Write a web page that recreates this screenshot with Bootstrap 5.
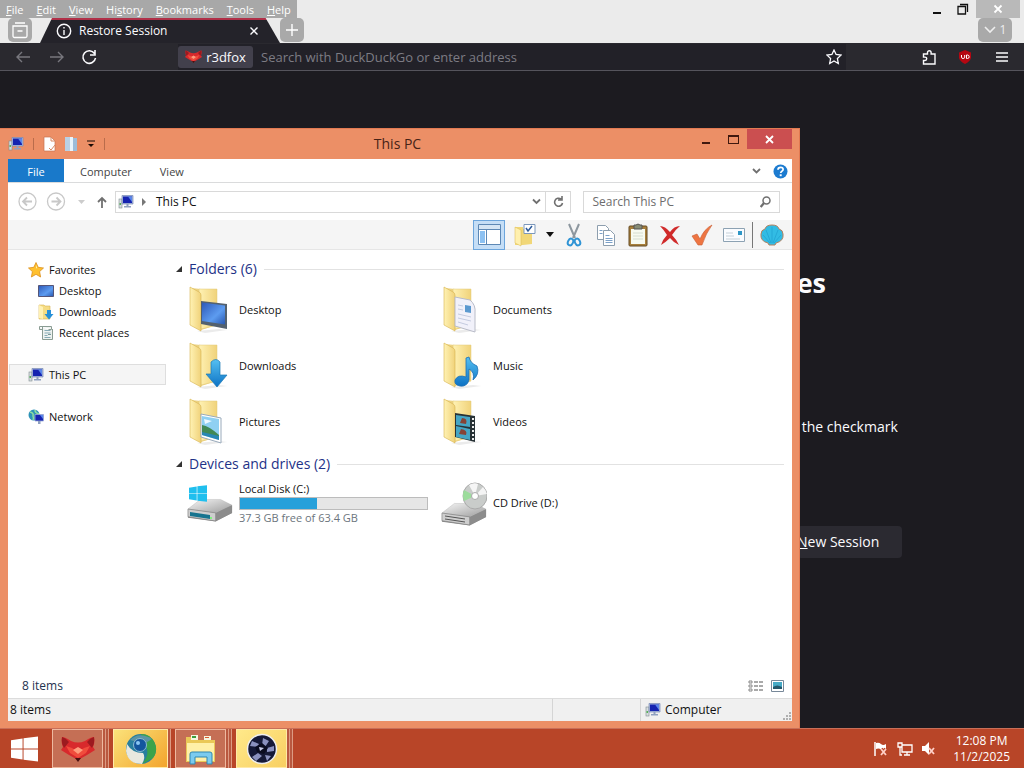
<!DOCTYPE html>
<html lang="en">
<head>
<meta charset="utf-8">
<meta name="viewport" content="width=device-width, initial-scale=1">
<title>Restore Session</title>
<link href="https://cdn.jsdelivr.net/npm/bootstrap@5.3.0/dist/css/bootstrap.min.css" rel="stylesheet">
<style>
body{font-family:"Open Sans","Noto Sans",sans-serif;font-size:12px;line-height:16px;color:#111;background:#1c1b20}
button{border:0;background:none;padding:0;color:inherit;display:inline-flex;align-items:center;justify-content:center;flex:none}
a{color:inherit;text-decoration:none}
svg{display:block;flex:none}
.ln{fill:none;stroke:currentColor}
/* browser */
.menus{background:#a8a8a8;color:#fff;height:18px;padding:2px 6px 0;gap:13px;font-size:11px}
.chrome-top{background:#ebebeb;height:18px}
.strip{background:#ebebeb;height:25px}
.sq{background:#a9a9a9;color:#fff;width:24px;height:24px;border-radius:5px}
.sq-wide{width:34px;margin-right:12px;color:#eee}
.ctl{width:26px;height:18px;color:#111}
.ctl-x{width:44px;background:#b9b9b9;color:#fff}
.tabbox{width:240px;height:25px;color:#fbfbfe;margin:0 0 0 8px;padding:0 21px 0 16px;gap:7px;background:linear-gradient(#b03048 2px,#24232a 2px);clip-path:polygon(5% 0,94% 0,100% 100%,0 100%)}
.tools{background:#2a292f;height:28px;border-bottom:1px solid #55545c;color:#fbfbfe}
.dim{color:#78777e}
.url{background:#222128;height:26px;margin:0 68px 0 80px;padding-right:4px}
.ident{background:#42404c;border-radius:3px;height:22px;width:75px;gap:4px;font-size:13px}
.url input{background:none;border:0;color:#8b8a92;font-size:13px;outline:0;min-width:0}
.url input::placeholder{color:#7d7c84;opacity:1}
.page{padding:194px 0 0 77.8%;color:#fbfbfe;font-size:14px}
.page h1{font-size:27px;line-height:36px;font-weight:700;margin:0 0 116px}
.page p{margin:0 0 89px;padding-left:5px;line-height:20px;white-space:nowrap}
.page button{background:#2b2a31;border-radius:4px;height:32px;width:105px;padding-right:22px}
/* explorer */
.win{position:absolute;left:0;top:128px;bottom:0;width:78.125%;background:#ec8f66;border:solid #e27a52;border-width:1px 1px 0 0;padding:0 7px 7px 8px}
.title-row{height:30px;font-size:14px;color:#472317}
.qat{gap:9px;width:110px}
.caps button{width:27px;height:20px;color:#40190f}
.caps .shut{width:45px;background:#cb4f50;color:#fff}
.face{background:#fff;min-height:0}
.tabs{height:24px;border-bottom:1px solid #dadbdc;color:#444;font-size:11px}
.tabs button{padding-top:2px}
.tabs .filetab{background:#1979ca;color:#fff;width:56px;height:23px}
.pale{color:#c8c8c8}
.grey{color:#707070}
.addr{height:37px;padding:0 12px 0 10px}
.fld{border:1px solid #d9d9d9;height:22px}
.seek{width:25.8%;margin-left:12px}
.fld input{border:0;outline:0;background:none;font-size:12px;min-width:0}
.fld input::placeholder{color:#6d6d6d;opacity:1}
.refresh{width:25px;border-left:1px solid #d9d9d9}
.bar{height:30px;background:#f5f5f5;border-bottom:1px solid #e6e6e6;padding-right:8px;gap:8px}
.bar button{width:24px;height:28px}
.bar .on{width:32px;height:30px;background:#c5def6;border:1px solid #6ca5dc}
.bar .more{width:9px}
.bar .rule{width:1px;height:26px;background:#777;margin:0 -1px 0 -2px}
.side{width:162px;padding:9px 4px 0 1px;font-size:11px}
.side a{display:flex;align-items:center;gap:5px;height:21px;padding-left:18px;border:1px solid transparent}
.side a.sub{padding-left:28px}
.side a.cur{background:#f5f5f5;border-color:#dedede}
.side .apart{margin-top:21px}
.list{padding:8px 8px 0 6px}
.grp{font-size:14px;line-height:22px;color:#1e3287;margin:0;font-weight:400;gap:7px}
.grp::after{content:"";flex:1;border-top:1px solid #e2e2e2}
.tiles{display:grid;grid-template-columns:repeat(auto-fill,254px);grid-auto-rows:56px;padding:2px 0 0 9px;margin-bottom:3px;font-size:11px}
.tiles a{display:flex;align-items:center;gap:6px}
.meter{width:189px;height:13px;background:#e6e6e6;border:1px solid #bcbcbc}
.meter div{height:100%;background:#26a0da}
.det{height:24px;padding:0 8px 0 14px;color:#1f3350}
.stat{height:23px;background:#f0f0f0;border-top:1px solid #dcdcdc}
.stat span{padding-left:2px}
.cell{border-left:1px solid #d5d5d5;height:22px}
/* taskbar */
.task{height:40px;background:#b84528;border-top:1px solid #c96f58;color:#fff}
.start{width:52px;padding-right:4px}
.app{width:51px;height:39px;border:1px solid #eeb9a0;background:#c56f55}
.app-y{background:linear-gradient(135deg,#fbe27a,#f3a42c);border-color:#ffe9a8}
.app-p{background:linear-gradient(135deg,#ffe98a,#f8cf62);border-color:#ffe9a8}
.app-w{width:55px}
.stack{width:3px;height:39px;border-right:1px solid #dc9b83;background:#b9583f}
.slot{margin-right:4px}
.tray{gap:8px;margin-right:14px}
</style>
</head>
<body class="vh-100 overflow-hidden d-flex flex-column">
<svg width="0" height="0" class="position-absolute">
<defs>
<linearGradient id="gy" x2="1"><stop stop-color="#fff2b4"/><stop offset="1" stop-color="#f0d27a"/></linearGradient>
<linearGradient id="gb" x2="1" y2="1"><stop stop-color="#2d58b8"/><stop offset=".6" stop-color="#5d9cf0"/><stop offset="1" stop-color="#2857b0"/></linearGradient>
<linearGradient id="gd" y2="1" x2="0"><stop stop-color="#55c0f2"/><stop offset="1" stop-color="#0d72c4"/></linearGradient>
<linearGradient id="gs" y2="1" x2="1"><stop stop-color="#f6f6f6"/><stop offset="1" stop-color="#9c9c9c"/></linearGradient>
<symbol id="pc" viewBox="0 0 16 16"><rect x="1" y="5" width="3" height="9" fill="#d7dde0" stroke="#7f8c90" stroke-width=".6"/><rect x="1.500" y="9" width="1.500" height="2" fill="#58b158"/><path d="M4 1.500h11v8.500H4z" fill="#a9b9dc" stroke="#7788b5" stroke-width=".7"/><path d="M5 2.500h9v6.500H5z" fill="#1523b0"/><path d="M10 2.500h4V8z" fill="#5a86ea"/><path d="M8.500 10h2v2h2.500v1.500H6V12h2.500z" fill="#8fa0bf"/></symbol>
<symbol id="fold" viewBox="0 0 48 48"><path d="M12 45l22-2 8 1-22 3z" fill="#ddd" opacity=".6"/><path d="M6 2l10 1h16v36l-16 5z" fill="#ecd283"/><path d="M14 3h18v36l-16 4z" fill="url(#gy)" stroke="#e3ca78" stroke-width=".5"/><path d="M5 1l9 5q2 1 2 3v36L5 39z" fill="url(#gy)" stroke="#d6b44f" stroke-width=".6"/></symbol>
<symbol id="fox" viewBox="0 0 34 26"><path d="M1 1q3 0 9 4 7 3 14 0 6-4 9-4 1 6-1 10l2 3-8 5-9 5-9-5-8-5 2-3Q0 7 1 1z" fill="#d8292c"/><path d="M1 1q4 1 7 5l-5 6Q0 7 1 1zM33 1q-4 1-7 5l5 6q3-5 2-11z" fill="#9c1a1f"/><path d="M5 10l6 2 6 4 6-4 6-2-4 7-8 5-8-5z" fill="#f04c3c"/><path d="M12 14l5-3 5 3-5 4z" fill="#ff9c7c"/><path d="M14 22h6l-3 4z" fill="#4a1010"/></symbol>
<symbol id="win" viewBox="0 0 28 26"><path d="M0 4l12-2v10.500H0zM13 1.800L28 0v12.500H13zM0 13.500h12V24L0 22zM13 13.500h15V26l-15-1.800z"/></symbol>
<symbol id="drive" viewBox="0 0 48 24"><path d="M1 12L14 2h21l12 5v8L30 24 1 20z" fill="#8d8d8d"/><path d="M1 11L14 1h21l12 6-17 8z" fill="url(#gs)" stroke="#bbb" stroke-width=".5"/><path d="M1 11l29 4v8.500L1 19z" fill="#cecece" stroke="#777" stroke-width=".6"/><path d="M30 15l17-8v8l-17 8.500z" fill="#8c8c8c"/></symbol>
</defs></svg>

<main class="flex-grow-1 position-relative d-flex flex-column overflow-hidden">
 <header>
  <div class="chrome-top d-flex">
   <nav class="menus d-flex" aria-label="Menu bar">
    <button type="button"><span><u>F</u>ile</span></button><button type="button"><span><u>E</u>dit</span></button><button type="button"><span><u>V</u>iew</span></button><button type="button"><span>Hi<u>s</u>tory</span></button><button type="button"><span><u>B</u>ookmarks</span></button><button type="button"><span><u>T</u>ools</span></button><button type="button"><span><u>H</u>elp</span></button>
   </nav>
   <div class="ms-auto d-flex">
    <button class="ctl" type="button" aria-label="Minimize"><svg width="10" height="10"><path d="M1 9h8" stroke="#111" stroke-width="2"/></svg></button>
    <button class="ctl" type="button" aria-label="Restore"><svg class="ln" width="12" height="12" stroke-width="1.300"><path d="M1 3.500h7.500V11H1zM3 1.500h7.500V9"/></svg></button>
    <button class="ctl ctl-x ms-0 me-1" type="button" aria-label="Close browser"><svg class="ln" width="10" height="10" stroke-width="1.800"><path d="M1.500 1.500l7 7M8.500 1.500l-7 7"/></svg></button>
   </div>
  </div>
  <div class="strip d-flex">
   <button class="sq ms-2" type="button" aria-label="Recent browsing"><svg class="ln" width="18" height="18" stroke-width="1.300"><path d="M4 2h10M2 5h14v10a1.500 1.500 0 0 1-1.500 1.500h-11A1.500 1.500 0 0 1 2 15zM6.500 10h5"/></svg></button>
   <div class="tabbox d-flex align-items-center">
    <svg class="ln" width="16" height="16" stroke-width="1.400"><circle cx="8" cy="8" r="6.700"/><path d="M8 7v5M8 4v1.500"/></svg><span>Restore Session</span>
    <button class="ms-auto" type="button" aria-label="Close tab"><svg class="ln" width="10" height="10" stroke-width="1.400"><path d="M1.500 1.500l7 7M8.500 1.500l-7 7"/></svg></button>
   </div>
   <button class="sq" type="button" aria-label="New tab"><svg class="ln" width="14" height="14" stroke-width="1.400"><path d="M7 1v12M1 7h12"/></svg></button>
   <button class="sq sq-wide ms-auto" type="button" aria-label="List all tabs"><svg class="ln" width="12" height="10" stroke-width="1.600"><path d="M1 2l5 5 5-5"/></svg><span class="ms-1">1</span></button>
  </div>
  <div class="tools d-flex align-items-center">
   <button class="dim ms-3" type="button" aria-label="Back"><svg class="ln" width="14" height="14" stroke-width="1.400"><path d="M14 7H1M6 2L1 7l5 5"/></svg></button>
   <button class="dim ms-3 ps-1" type="button" aria-label="Forward"><svg class="ln" width="14" height="14" stroke-width="1.400"><path d="M0 7h13M8 2l5 5-5 5"/></svg></button>
   <button class="ms-3" type="button" aria-label="Reload"><svg class="ln" width="18" height="16" stroke-width="1.600"><path d="M14.500 4.500A6.300 6.300 0 1 0 15.500 9M15 1v5h-5"/></svg></button>
   <div class="url d-flex align-items-center flex-grow-1">
    <button class="ident" type="button"><svg width="17" height="13"><use href="#fox"/></svg>r3dfox</button>
    <input class="flex-grow-1 ms-2 p-0" type="text" aria-label="Address" placeholder="Search with DuckDuckGo or enter address">
    <button type="button" aria-label="Bookmark"><svg class="ln" width="16" height="16" stroke-width="1.300"><path d="M8 1l2.100 4.500 4.900.6-3.600 3.400.9 5L8 12l-4.300 2.500.9-5L1 6.100l4.900-.6z"/></svg></button>
   </div>
   <button class="ms-2 me-1" type="button" aria-label="Extensions"><svg class="ln" width="16" height="16" stroke-width="1.400"><path d="M1.500 5h4V3.500a1.800 1.800 0 0 1 3.600 0V5H13v10H1.500v-3.500H3a1.700 1.700 0 0 0 0-3.400H1.500z"/></svg></button>
   <button class="mx-3 pe-2" type="button" aria-label="uBlock Origin"><svg width="14" height="14"><path d="M7 0l6 2.500V8q-1 3.500-6 6-5-2.500-6-6V2.500z" fill="#b50712"/><path d="M3.500 5v2.200q0 1.300 1.600 1.300T6.700 7.200V5M8.500 5h1q1.700.2 1.700 1.800T9.500 8.500h-1z" fill="none" stroke="#fff"/></svg></button>
   <button class="me-3" type="button" aria-label="Application menu"><svg class="ln" width="12" height="12" stroke-width="1.300"><path d="M0 2h12M0 6h12M0 10h12"/></svg></button>
  </div>
 </header>
 <section class="page flex-grow-1">
  <h1>es</h1>
  <p>the checkmark</p>
  <button type="button"><span><u>N</u>ew Session</span></button>
 </section>

 <section class="win d-flex flex-column" aria-label="This PC">
  <div class="title-row d-flex">
   <div class="qat d-flex align-items-center">
    <svg width="16" height="16"><use href="#pc"/></svg>
    <svg width="1" height="12"><path fill="#b96c4b" d="M0 0h1v12H0z"/></svg>
    <svg width="13" height="16"><path d="M1 1h7l4 4v10H1z" fill="#fff" stroke="#c77450" stroke-width=".7"/><path d="M8 1v4h4M6 12l2 2 4-5" fill="none" stroke="#d78963"/></svg>
    <svg width="13" height="16"><path d="M0 1h6v14H0z" fill="#bad1e5"/><path d="M5 1h3v14H5z" fill="#e9f4fb"/><path d="M8 2h4v13H8z" fill="#9dbcd8"/></svg>
    <svg width="8" height="8"><path d="M0 1h8" stroke="#1b0b05"/><path d="M1 4h6L4 7z" fill="#1b0b05"/></svg>
    <svg width="1" height="12"><path fill="#b96c4b" d="M0 0h1v12H0z"/></svg>
   </div>
   <div class="flex-grow-1 text-center align-self-center pe-3">This PC</div>
   <div class="caps d-flex">
    <button type="button" aria-label="Minimize"><svg width="9" height="10"><path d="M0 8h8v2H0z" fill="currentColor"/></svg></button>
    <button type="button" aria-label="Maximize"><svg width="11" height="9"><path d="M0 0h11v9H0zM1 2v6h9V2z" fill="currentColor" fill-rule="evenodd"/></svg></button>
    <button class="shut" type="button" aria-label="Close"><svg class="ln" width="9" height="9" stroke-width="1.800"><path d="M1 1l7 7M8 1L1 8"/></svg></button>
   </div>
  </div>
  <div class="face flex-grow-1 d-flex flex-column">
   <div class="tabs d-flex align-items-center">
    <button class="filetab align-self-start" type="button">File</button><button class="ms-3" type="button">Computer</button><button class="ms-4 ps-1" type="button">View</button>
    <button class="ms-auto me-2 pe-1 grey" type="button" aria-label="Collapse ribbon"><svg class="ln" width="9" height="7" stroke-width="1.800"><path d="M1 1l3.500 3.500L8 1"/></svg></button>
    <button class="me-1" type="button" aria-label="Help"><svg width="15" height="15"><circle cx="7.500" cy="7.500" r="7" fill="#1c7bd0"/><path d="M5 5.700q0-2.400 2.600-2.400t2.500 2.200c0 1.600-2.400 1.700-2.400 3.600" fill="none" stroke="#fff" stroke-width="1.700"/><path d="M6.700 10.300h2v1.900h-2z" fill="#fff"/></svg></button>
   </div>
   <div class="addr d-flex align-items-center">
    <button class="pale" type="button" aria-label="Back"><svg class="ln" width="19" height="19" stroke-width="1.300"><circle cx="9.500" cy="9.500" r="8.500"/><path d="M14 9.500H5.500M9 5.500l-4 4 4 4" stroke-width="1.800"/></svg></button>
    <button class="pale ms-2 ps-0" type="button" aria-label="Forward"><svg class="ln" width="21" height="19" stroke-width="1.300"><circle cx="11" cy="9.500" r="8.500"/><path d="M6.500 9.500H15M11.500 5.500l4 4-4 4" stroke-width="1.800"/></svg></button>
    <button class="ms-2 ps-1" type="button" aria-label="Recent"><svg width="7" height="4"><path d="M0 0h7L3.500 4z" fill="#ccc"/></svg></button>
    <button class="grey ms-2 ps-1" type="button" aria-label="Up"><svg class="ln" width="10" height="12" stroke-width="1.800"><path d="M5 12V2M1 6l4-4 4 4"/></svg></button>
    <div class="fld flex-grow-1 d-flex align-items-center ms-2">
     <svg class="ms-0" width="20" height="16"><use href="#pc"/></svg><svg class="ms-1 mx-1" width="8" height="8"><path d="M2 0l4 4-4 4z" fill="#777"/></svg><span class="ms-1">This PC</span>
     <button class="ms-auto me-1 grey" type="button" aria-label="Previous locations"><svg class="ln" width="9" height="8" stroke-width="1.800"><path d="M1 1.500L4.500 5 8 1.500"/></svg></button>
     <button class="h-100 refresh grey" type="button" aria-label="Refresh"><svg class="ln" width="11" height="12" stroke-width="1.600"><path d="M8 3A4 4 0 1 0 9.500 7M9 0v4H5"/></svg></button>
    </div>
    <div class="fld seek d-flex align-items-center ps-2 pe-2 grey"><input class="flex-grow-1 p-0" type="text" aria-label="Search" placeholder="Search This PC"><svg class="ln" width="11" height="12"><circle cx="6.500" cy="4.500" r="3.500" stroke-width="1.500"/><path d="M4 7L.7 11" stroke-width="2.200"/></svg></div>
   </div>
   <div class="bar d-flex align-items-center justify-content-end">
    <button class="on" type="button" aria-label="Navigation pane"><svg width="23" height="21"><path d="M.5.500h22v20H.5z" fill="#fff" stroke="#5d88b5"/><path d="M1 1h21v4H1z" fill="#d5e5f4"/><path d="M2 7h5v12H2z" fill="#8cc1f2"/><path d="M8.500 5v15M1 5.500h21" stroke="#5d88b5"/></svg></button>
    <button type="button" aria-label="Folder options"><svg width="22" height="24"><path d="M1 4h8v2h9v15l-9 1H1z" fill="#f1d778"/><path d="M1 4l6 3v16l-6-3z" fill="#fff0ae" stroke="#d9b64e" stroke-width=".5"/><path d="M10 1.500h11v9H10z" fill="#fff" stroke="#7b97bb"/><path d="M12 5l2 3 4-5" fill="none" stroke="#2c5a9a" stroke-width="1.500"/></svg></button>
    <button class="more" type="button" aria-label="More options"><svg width="8" height="5"><path d="M0 0h8L4 5z" fill="#111"/></svg></button>
    <button type="button" aria-label="Cut"><svg width="16" height="24"><path d="M3 1l6 14M13 1L7 15" stroke="#8d979f" stroke-width="2"/><ellipse cx="4.500" cy="19" rx="2.500" ry="3.500" transform="rotate(25 4.500 19)" fill="none" stroke="#3094d5" stroke-width="2"/><ellipse cx="11.500" cy="19" rx="2.500" ry="3.500" transform="rotate(-25 11.500 19)" fill="none" stroke="#3094d5" stroke-width="2"/></svg></button>
    <button type="button" aria-label="Copy"><svg width="20" height="22" fill="#fff" stroke="#8d9eae"><path d="M1.500 1.500h8l3 3v11h-11z"/><path d="M7.500 6.500h7l4 4v11h-11z"/><path d="M9.500 11.500h4M9.500 14.500h7M9.500 16.500h7M9.500 18.500h7M3.500 6.500h3M3.500 9.500h3" stroke="#7ba0c8"/></svg></button>
    <button type="button" aria-label="Paste"><svg width="20" height="24"><rect x="1" y="3" width="18" height="20" rx="1" fill="#a8803c" stroke="#644b22"/><path d="M3 6h14v15H3z" fill="#f7faf0"/><path d="M6 2h2q2-2 4 0h2v4H6z" fill="#888d76" stroke="#555"/><path d="M5 10h10M5 13h10M5 16h10" stroke="#d6ddd0"/></svg></button>
    <button type="button" aria-label="Delete"><svg width="22" height="20"><path d="M1 1q5 0 10 6Q15 1 21 1q-5 4-8 9 4 4 7 10-6-3-9-7-4 4-9 7 2-6 6-10-3-5-7-9z" fill="#d02a2a"/></svg></button>
    <button type="button" aria-label="Apply"><svg width="22" height="22"><path d="M1 12l5-2 3 5Q13 5 21 1 15 9 11 21H7z" fill="#ee7542" stroke="#c85a30" stroke-width=".6"/></svg></button>
    <button type="button" aria-label="Mail"><svg width="22" height="14"><path d="M.5.500h21v13H.5z" fill="#fafcff" stroke="#8da2b3"/><path d="M15 3h4v4h-4z" fill="#2d96c6"/><path d="M3 5h7M3 8h8M3 11h14" stroke="#c5d0d8"/></svg></button>
    <div class="rule"></div>
    <button type="button" aria-label="Classic Shell"><svg width="24" height="22"><path d="M8 19Q0 17 1 10q0-4 4-5 1-4 7-4t7 4q4 1 4 5 1 7-7 9l-1 2H9z" fill="#32bce4" stroke="#b4805e"/><path d="M12 19V3M11 19L6 6M13 19l5-13M10 19l-7-8M14 19l7-8" stroke="#22a3d2" stroke-width=".8" fill="none"/></svg></button>
   </div>
   <div class="flex-grow-1 d-flex overflow-hidden">
    <nav class="side flex-shrink-0" aria-label="Folders">
     <a href="#"><svg width="16" height="16"><path d="M8 .5l2.200 4.800 5.300.7-3.900 3.600 1 5.400L8 12.300 3.400 15l1-5.400L.5 6l5.300-.7z" fill="#ffc02e" stroke="#dc8f1d" stroke-width=".8"/><path d="M8 3l1.300 3.300H8z" fill="#fff2b0"/></svg>Favorites</a>
     <a class="sub" href="#"><svg width="16" height="14"><path d="M.5 1.500h15v11H.5z" fill="url(#gb)" stroke="#557"/></svg>Desktop</a>
     <a class="sub" href="#"><svg width="16" height="16"><path d="M1 1h5l1 1h5v13H1z" fill="#f5dc83" stroke="#d7b451" stroke-width=".6"/><path d="M1 1l4 2v12l-4-1z" fill="#fff1b4"/><path d="M9 6h4v4h2.500L11 15.500 6.500 10H9z" fill="#2790d8"/></svg>Downloads</a>
     <a class="sub" href="#"><svg width="16" height="16"><path d="M1.500 1.500h12v3h-3M4.500 2v12.500h10V4M1.500 1.500v3h3" fill="#eef2f0" stroke="#8a9c93"/><path d="M6.500 5.500h6M6.500 8h6M6.500 10.500h3M6.500 12.500h6" stroke="#86aab5"/><path d="M10 9.500h3" stroke="#799"/></svg>Recent places</a>
     <a class="cur apart" href="#"><svg width="16" height="16"><use href="#pc"/></svg>This PC</a>
     <a class="apart" href="#"><svg width="16" height="16"><circle cx="6" cy="6" r="5.500" fill="#2d93b8"/><path d="M2 3q4 1 3 4 1 2 0 4M7 1q0 3 4 4" stroke="#8edfa0" stroke-width="1.500" fill="none"/><path d="M7 5.500h8.500v6.500H7z" fill="#1523b0" stroke="#9cacd8" stroke-width=".8"/><path d="M10 12h2.500v3H10z" fill="#8fa0bf"/><path d="M12 6h3v4z" fill="#5a86ea"/></svg>Network</a>
    </nav>
    <div class="list flex-grow-1">
     <h2 class="grp d-flex align-items-center"><svg width="6" height="6"><path d="M6 0v6H0z" fill="#333"/></svg>Folders (6)</h2>
     <div class="tiles">
      <a href="#"><svg width="48" height="48"><use href="#fold"/><path d="M16 15l26 3v25L16 38z" fill="#53616f"/><path d="M17 16.500l23 3v19L17 35z" fill="url(#gb)"/></svg>Desktop</a>
      <a href="#"><svg width="48" height="48"><use href="#fold"/><path d="M16 11l15 3q6 5 5 13v19L16 40z" fill="#f1f1fa" stroke="#b9bcc8"/><path d="M26 19l6 1v7l-6-1z" fill="#5b99cf"/><path d="M19 19l5 1M19 23l5 1M19 28l13 3M19 32l13 3M19 36l10 3" stroke="#c4cbe0"/></svg>Documents</a>
      <a href="#"><svg width="48" height="48"><use href="#fold"/><path d="M26 20q5-5 9 0v13h7L32 45 21 32h5z" fill="url(#gd)" stroke="#1b79b6" stroke-width=".7"/></svg>Downloads</a>
      <a href="#"><svg width="48" height="48"><use href="#fold"/><path d="M27 16l3-1q1 6 8 9 3 8-4 14 2-8-4-11v11q-2 7-9 6-6-1-5-6 3-6 11-3z" fill="url(#gd)" stroke="#1c6fb4" stroke-width=".8"/></svg>Music</a>
      <a href="#"><svg width="48" height="48"><use href="#fold"/><path d="M16 16l20 4v25l-20-6z" fill="#fff" stroke="#9ab"/><path d="M17 18l17 3v21l-17-5z" fill="#8fd0f2"/><path d="M17 27q7 1 17 10v3l-17-5z" fill="#408955"/><path d="M17 34l17 4v4l-17-5z" fill="#2787b4"/><path d="M19 21l8 2-7 3z" fill="#edf8ff"/></svg>Pictures</a>
      <a href="#"><svg width="48" height="48"><use href="#fold"/><path d="M16 15l20 3v26l-20-5z" fill="#283236"/><path d="M17 17l14 2v10l-14-2zM17 28l14 3v11l-14-3z" fill="#45a5c4"/><path d="M23 20q6 0 4 6l-6-1zM22 31q7 1 5 6l-7-1z" fill="#874335"/><path d="M34 20v22" stroke="#eee" stroke-width="2" stroke-dasharray="2 2"/></svg>Videos</a>
     </div>
     <h2 class="grp d-flex align-items-center"><svg width="6" height="6"><path d="M6 0v6H0z" fill="#333"/></svg>Devices and drives (2)</h2>
     <div class="tiles pt-0">
      <a href="#"><svg width="48" height="48"><use href="#drive" x="2" y="19" width="46" height="24"/><path d="M5 33l20 3v4L5 37z" fill="#17748f"/><circle cx="26" cy="39" r="1" fill="#6f6"/><use href="#win" x="4" y="6" width="18" height="17" fill="#20bfee"/></svg>
       <span><span class="d-block">Local Disk (C:)</span><span class="meter d-block" role="progressbar" aria-label="Space used"><div style="width:41%"></div></span><span class="d-block text-secondary">37.3 GB free of 63.4 GB</span></span></a>
      <a href="#"><svg width="48" height="48"><use href="#drive" x="2" y="23" width="46" height="24"/><path d="M6 37l20 3M6 40l20 3" stroke="#555"/><ellipse cx="36" cy="17" rx="12" ry="13" fill="#c9ccca" stroke="#aaa"/><path d="M36 17L25 11q-2 5 0 11z" fill="#9cdc9c"/><path d="M36 17l8-9q3 3 4 7z" fill="#f4f4f4"/><path d="M36 17l-6-11q5-3 9-1z" fill="#f5f5f5"/><circle cx="36" cy="17" r="3.500" fill="#fff" stroke="#aaa"/></svg>CD Drive (D:)</a>
     </div>
    </div>
   </div>
   <div class="det d-flex align-items-center"><span>8 items</span>
    <button class="ms-auto" type="button" aria-label="Details view"><svg width="15" height="12"><path d="M1 1h3v2H1zM1 5h3v2H1zM1 9h3v2H1z" fill="#fff" stroke="#888"/><path d="M6 2h4M11 2h4M6 6h4M11 6h4M6 10h4M11 10h4" stroke="#555"/></svg></button>
    <button class="ms-2" type="button" aria-label="Icon view"><svg width="13" height="12"><path d="M.5.500h12v11H.5z" fill="#fff" stroke="#789"/><path d="M2 2h9v7H2z" fill="#46aac6"/><path d="M2 7q4-3 9 0v2H2z" fill="#24576b"/></svg></button></div>
   <div class="stat d-flex align-items-center"><span class="flex-grow-1">8 items</span><div class="cell" style="width:11.2%"></div>
    <div class="cell d-flex align-items-center gap-1 ps-1" style="width:19.400%"><svg width="16" height="16"><use href="#pc"/></svg>Computer<svg class="ms-auto align-self-end" width="10" height="10" fill="#b0b0b0"><path d="M7 1h2v2H7zM4 4h2v2H4zM7 4h2v2H7zM1 7h2v2H1zM4 7h2v2H4zM7 7h2v2H7z"/></svg></div></div>
  </div>
 </section>
</main>

<footer class="task d-flex align-items-center flex-shrink-0">
 <button class="start" type="button" aria-label="Start"><svg width="27" height="26" fill="#fff"><use href="#win"/></svg></button>
 <div class="slot d-flex"><button class="app" type="button" aria-label="r3dfox"><svg width="34" height="26"><use href="#fox"/></svg></button><i class="stack"></i><i class="stack"></i></div>
 <div class="slot d-flex"><button class="app app-y app-w" type="button" aria-label="Browser"><svg width="32" height="32"><circle cx="16" cy="16" r="15" fill="#287f9e"/><path d="M16 1a15 15 0 0 1 12 24L17 31q9-10 3-19z" fill="#3ba34a"/><path d="M2 11q5 9 16 9 3 4-1 11Q3 31 1 18z" fill="#e8e8df"/><path d="M5 7q9-9 22-1l-8 5z" fill="#5d95a4"/><circle cx="15" cy="12" r="6.500" fill="#14569e" stroke="#8dbbd2"/><circle cx="13" cy="10" r="2" fill="#8ac7f4"/></svg></button><i class="stack"></i></div>
 <div class="slot d-flex"><button class="app" type="button" aria-label="File Explorer"><svg width="34" height="32"><path d="M2 4h9l2 3h18v22H2z" fill="#eac857"/><path d="M3 10h27v18H3z" fill="#fff0a8"/><path d="M7 2h7v5H7zM20 3h7v4h-7z" fill="#f5f5df"/><path d="M8 3h4v2H8z" fill="#3b9c3e"/><path d="M21 4h4v1h-4z" fill="#d85b32"/><path d="M6 31V21q0-2 2-2h18q2 0 2 2v10h-5v-7H11v7z" fill="#7bcbef" stroke="#3187b1"/></svg></button><i class="stack"></i><i class="stack"></i></div>
 <div class="slot d-flex"><button class="app app-p" type="button" aria-label="System tool"><svg width="32" height="32"><circle cx="16" cy="16" r="14.500" fill="#151937" stroke="#eee" stroke-width="1.500"/><path d="M6 8l7 3-2 3-7-1zM17 5l6 3-4 6-3-2zM21 15l7-2v5l-7 1zM12 20l4 3-6 5-4-4zM19 22l6 1-4 5z" fill="#8a91bf"/><path d="M9 14l7-4 6 5-4 6-7-2z" fill="#0a0c20"/><path d="M13 14l5 1-4 3z" fill="#c9cde8"/></svg></button><i class="stack"></i><i class="stack"></i></div>
 <div class="tray ms-auto d-flex align-items-center">
  <button type="button" aria-label="Action center"><svg width="16" height="16"><path d="M2 1v14" stroke="#fff" stroke-width="1.500"/><path d="M3 2q3-1 5 1t5 0v6q-3 1-5-.5T3 8z" fill="#fff"/><path d="M8 8l5 6M13 8l-5 6" stroke="#b84528" stroke-width="4"/><path d="M8 8l5 6M13 8l-5 6" stroke="#ffd0c8" stroke-width="1.800"/></svg></button>
  <button type="button" aria-label="Network"><svg class="ln" width="16" height="16" stroke-width="1.300"><path d="M5 4h10v7H5zM10 11v3M7 14h6M1 2h4v4H1zM3 6v8h2"/></svg></button>
  <button type="button" aria-label="Volume muted"><svg width="16" height="16"><path d="M1 5h3l4-4v13l-4-4H1z" fill="#fff"/><path d="M8 7l5 6M13 7l-5 6" stroke="#ffd0c8" stroke-width="1.800"/></svg></button>
  <div class="text-center ms-2"><div>12:08 PM</div><div>11/2/2025</div></div>
 </div>
</footer>
<script src="https://cdn.jsdelivr.net/npm/bootstrap@5.3.0/dist/js/bootstrap.bundle.min.js"></script>
</body>
</html>
